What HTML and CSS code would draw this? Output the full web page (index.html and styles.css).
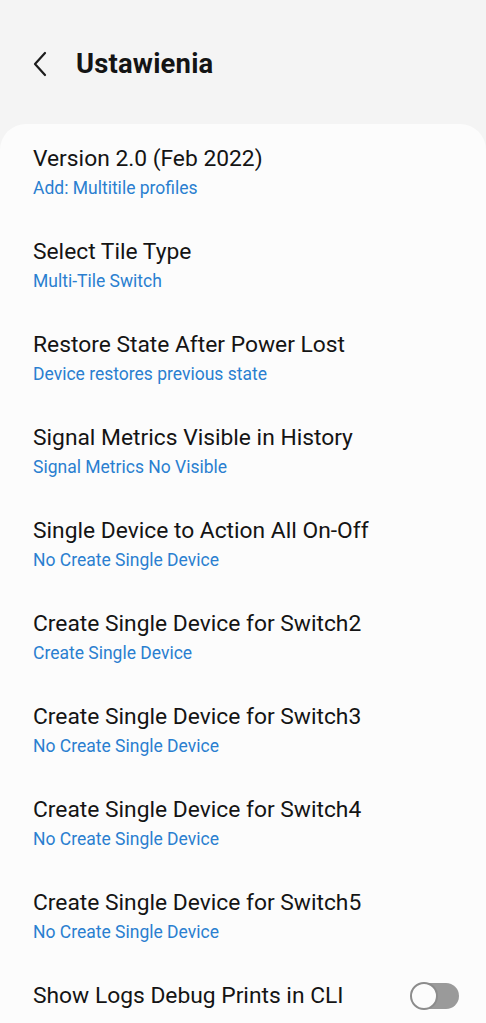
FILE: index.html
```html
<!DOCTYPE html>
<html lang="pl">
<head>
    <meta charset="UTF-8">
    <meta name="viewport" content="width=device-width, initial-scale=1.0">
    <title>Ustawienia</title>
    <link rel="stylesheet" href="styles.css">
</head>
<body>
    <div class="header">
        <svg class="back" width="20" height="28" viewBox="0 0 20 28">
            <path d="M14 3 L4 14 L14 25" fill="none" stroke="#1c1c1c" stroke-width="2.2" stroke-linecap="round" stroke-linejoin="round"/>
        </svg>
        <h1>Ustawienia</h1>
    </div>

    <div class="card">
        <div class="item">
            <div class="title">Version 2.0 (Feb 2022)</div>
            <div class="sub">Add: Multitile profiles</div>
        </div>
        <div class="item">
            <div class="title">Select Tile Type</div>
            <div class="sub">Multi-Tile Switch</div>
        </div>
        <div class="item">
            <div class="title">Restore State After Power Lost</div>
            <div class="sub">Device restores previous state</div>
        </div>
        <div class="item">
            <div class="title">Signal Metrics Visible in History</div>
            <div class="sub">Signal Metrics No Visible</div>
        </div>
        <div class="item">
            <div class="title">Single Device to Action All On-Off</div>
            <div class="sub">No Create Single Device</div>
        </div>
        <div class="item">
            <div class="title">Create Single Device for Switch2</div>
            <div class="sub">Create Single Device</div>
        </div>
        <div class="item">
            <div class="title">Create Single Device for Switch3</div>
            <div class="sub">No Create Single Device</div>
        </div>
        <div class="item">
            <div class="title">Create Single Device for Switch4</div>
            <div class="sub">No Create Single Device</div>
        </div>
        <div class="item">
            <div class="title">Create Single Device for Switch5</div>
            <div class="sub">No Create Single Device</div>
        </div>
        <div class="item toggle-row">
            <div class="title">Show Logs Debug Prints in CLI</div>
            <div class="switch"><span class="thumb"></span></div>
        </div>
    </div>
</body>
</html>
```

FILE: styles.css
```css
body {
    margin: 0;
    font-family: Roboto, "Noto Sans", sans-serif;
    background-color: #f4f4f4;
    color: #141414;
}
.header {
    height: 124px;
    display: flex;
    align-items: center;
    padding: 4px 0 0 31px;
    box-sizing: border-box;
}
.back {
    margin-right: 25px;
}
h1 {
    margin: 0;
    font-size: 27.4px;
    font-weight: 700;
    letter-spacing: 0.2px;
}
.card {
    background-color: #fcfcfc;
    border-radius: 26px;
    padding-bottom: 20px;
}
.item {
    padding: 21px 33px 18px;
}
.title {
    font-size: 22.8px;
    line-height: 28px;
}
.sub {
    margin-top: 4px;
    font-size: 17.5px;
    line-height: 22px;
    color: #2a7fd0;
}
.toggle-row {
    display: flex;
    align-items: center;
    justify-content: space-between;
    padding-right: 27px;
}
.switch {
    position: relative;
    width: 48px;
    height: 26px;
    border-radius: 13px;
    background-color: #9a9a9a;
}
.thumb {
    position: absolute;
    left: -1px;
    top: -1px;
    width: 24px;
    height: 24px;
    border-radius: 50%;
    background-color: #fcfcfc;
    border: 2px solid #8c8c8c;
}
```
